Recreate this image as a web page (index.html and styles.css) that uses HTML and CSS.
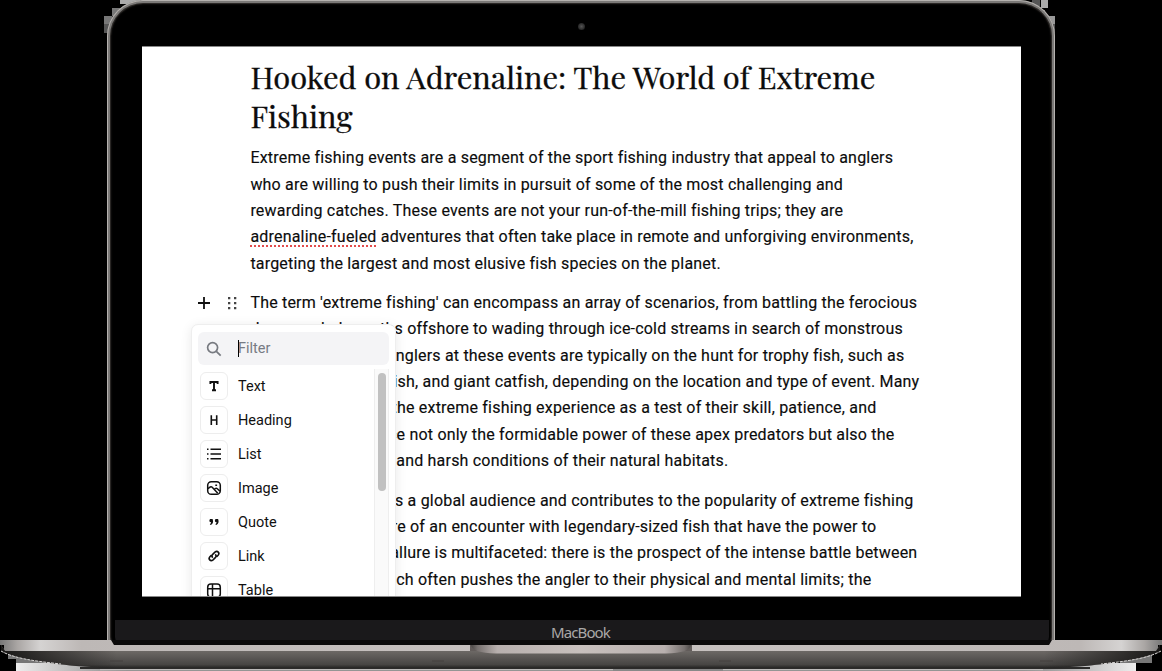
FILE: index.html
```html
<!DOCTYPE html>
<html lang="en">
<head>
<meta charset="utf-8">
<title>Hooked on Adrenaline</title>
<link rel="stylesheet" href="styles.css">
</head>
<body>
<div class="stage">
  <svg class="corners" width="1162" height="60" viewBox="0 0 1162 60" shape-rendering="crispEdges">
    <path fill="#777" d="M104 16h8v8h-8zM112 8h8v8h-8z"/><path fill="#aaa" d="M120 0h20v4h-20zM1041 0h7v8h-7z"/><path fill="#999" d="M1046 16h9v8h-9z"/><path fill="#555" d="M104 24h6v9h-6zM1049 24h6v9h-6zM1032 0h8v6h-8z"/>
  </svg>
  <div class="lid">
    <div class="camera-row"><span class="camera"></span></div>
    <main class="screen">
      <article class="doc">
        <h1>Hooked on Adrenaline: The World of Extreme<br>Fishing</h1>
        <div class="para">
          <p class="w1">Extreme fishing events are a segment of the sport fishing industry that appeal to anglers</p>
          <p class="w2">who are willing to push their limits in pursuit of some of the most challenging and</p>
          <p class="w3">rewarding catches. These events are not your run-of-the-mill fishing trips; they are</p>
          <p class="w4"><span class="typo">adrenaline-fueled</span> adventures that often take place in remote and unforgiving environments,</p>
          <p class="w5">targeting the largest and most elusive fish species on the planet.</p>
        </div>
        <div class="para">
          <p class="w6">The term 'extreme fishing' can encompass an array of scenarios, from battling the ferocious</p>
          <p class="w7">deep-sea behemoths offshore to wading through ice-cold streams in search of monstrous</p>
          <p class="w8 tail">anglers at these events are typically on the hunt for trophy fish, such as</p>
          <p class="w9 tail">fish, and giant catfish, depending on the location and type of event. Many</p>
          <p class="w10 tail">the extreme fishing experience as a test of their skill, patience, and</p>
          <p class="w11 tail">face not only the formidable power of these apex predators but also the</p>
          <p class="w12 tail">and harsh conditions of their natural habitats.</p>
        </div>
        <div class="para">
          <p class="w13 tail">draws a global audience and contributes to the popularity of extreme fishing</p>
          <p class="w14 tail">lure of an encounter with legendary-sized fish that have the power to</p>
          <p class="w15 tail">allure is multifaceted: there is the prospect of the intense battle between</p>
          <p class="w16 tail">which often pushes the angler to their physical and mental limits; the</p>
        </div>
      </article>
      <div class="handles">
        <svg width="14" height="14" viewBox="0 0 14 14"><path d="M7 1v12M1 7h12" stroke="#111" stroke-width="1.8"/></svg>
        <svg width="10" height="14" viewBox="0 0 10 14" fill="#444"><path d="M0 1h2.300v2.300H0zM6 1h2.300v2.300H6zM0 6h2.300v2.300H0zM6 6h2.300v2.300H6zM0 11h2.300v2.300H0zM6 11h2.300v2.300H6z"/></svg>
      </div>
      <div class="menu">
        <div class="filter">
          <svg width="16" height="16" viewBox="0 0 16 16" fill="none" stroke="#777a80" stroke-width="1.7"><circle cx="6.6" cy="6.6" r="5"/><path d="m10.3 10.3 4.4 4.4"/></svg>
          <span class="caret"></span><span>Filter</span>
        </div>
        <div class="list">
          <ul>
            <li><i><svg viewBox="0 0 16 16"><path d="M4.400 6V4h7.200v2M8 4v8M6 12.200h4" stroke-width="1.900"/></svg></i>Text</li>
            <li><i><svg viewBox="0 0 16 16"><path d="M5.300 3.200v9.800M10.700 3.200v9.800M5.300 8h5.400" stroke-width="1.6"/></svg></i>Heading</li>
            <li><i><svg viewBox="0 0 16 16"><path d="M4.5 3.3H15M4.5 8H15M4.5 12.7H15M1 3.3h1.5M1 8h1.5M1 12.7h1.5" stroke-width="1.6"/></svg></i>List</li>
            <li><i><svg viewBox="0 0 16 16"><rect x="1.7" y="1.7" width="12.6" height="12.6" rx="3.6"/><path d="m2 8.600 2.300-1.600q1-.6 1.900.3l5.600 6M8 9.500l1.300-1q1-.7 2 .2l2.600 2.400M9.300 5.200h1.800"/></svg></i>Image</li>
            <li><i><svg viewBox="0 0 16 16"><path d="M4 4.900h2.600Q8.200 9 4.800 11l-1-.8q1.400-.8 1.300-1.900Q2.300 7.500 4 4.900zM9.500 4.900h2.600Q13.700 9 10.300 11l-1-.8q1.400-.8 1.300-1.900Q7.800 7.500 9.500 4.900z" fill="#111" stroke="none"/></svg></i>Quote</li>
            <li><i><svg viewBox="0 0 16 16"><path d="M6.700 9.700c-1.100-1.200-1-2.400 0-3.400l2.200-2.100c2.700-2 5.200.8 3.200 3.100l-1.400 1.400M9.200 6.300c1.200 1.100 1.100 2.400.1 3.400l-2.200 2.100c-2.700 2-5.200-.8-3.200-3.100l1.400-1.400" stroke-width="1.600"/></svg></i>Link</li>
            <li><i><svg viewBox="0 0 16 16"><rect x="1.7" y="2" width="12.6" height="13" rx="3.2"/><path d="M2 6.700h12M6.500 2v13"/></svg></i>Table</li>
          </ul>
          <div class="track"><div class="thumb"></div></div>
        </div>
      </div>
    </main>
    <div class="chin"><span>MacBook</span></div>
  </div>
  <svg class="base" width="1162" height="31" viewBox="0 0 1162 31">
    <defs>
      <linearGradient id="metal" x2="0" y2="1"><stop offset="0" stop-color="#817c79"/><stop offset=".3" stop-color="#6a6663"/><stop offset=".85" stop-color="#474543"/><stop offset="1" stop-color="#252423"/></linearGradient>
      <linearGradient id="deck"><stop offset="0" stop-color="#777"/><stop offset=".015" stop-color="#aaa6a4"/><stop offset=".035" stop-color="#d5d3d2"/><stop offset=".07" stop-color="#bdb8b6"/><stop offset=".5" stop-color="#c9c3c1"/><stop offset=".93" stop-color="#bdb8b6"/><stop offset=".965" stop-color="#d5d3d2"/><stop offset=".985" stop-color="#aaa6a4"/><stop offset="1" stop-color="#777"/></linearGradient>
      <linearGradient id="notch"><stop offset="0" stop-color="#4c4846"/><stop offset=".03" stop-color="#77716f"/><stop offset=".12" stop-color="#b8b0ae"/><stop offset=".5" stop-color="#c8c0bd"/><stop offset=".88" stop-color="#b8b0ae"/><stop offset=".97" stop-color="#77716f"/><stop offset="1" stop-color="#4c4846"/></linearGradient>
      <linearGradient id="tip"><stop offset="0" stop-color="#181716"/><stop offset=".1" stop-color="#181716" stop-opacity="0"/><stop offset=".9" stop-color="#181716" stop-opacity="0"/><stop offset="1" stop-color="#181716"/></linearGradient>
      <linearGradient id="under"><stop offset="0" stop-color="#eee"/><stop offset=".1" stop-color="#888"/><stop offset=".9" stop-color="#888"/><stop offset="1" stop-color="#eee"/></linearGradient>
    </defs>
    <path fill="#777" d="M8 15h40v8H16v-4H8zM1120 15h32v8h-32z"/>
    <path fill="url(#under)" d="M16 23h1120v8H16z"/>
    <path fill="#2b2a29" d="M80 27h1010v2H80z"/>
    <path fill="#bcbab9" d="M100 29h513v1.300H100zM723 29h320v1.300H723z"/>
    <path fill="url(#deck)" d="M0 0h1162v5H0zM4 5h1154v6H4z"/>
    <path fill="url(#metal)" d="M1 5v6c15 8 45 12 75 15l30 2h949l30-2c30-3 60-7 75-15V5l-4 6H5z"/>
    <path fill="url(#tip)" d="M1 5v6c15 8 45 12 75 15l30 2h949l30-2c30-3 60-7 75-15V5l-4 6H5z"/>
    <path fill="none" stroke="#d8d6d5" stroke-dasharray="3 1" d="M1 11c12 7 32 10 60 13M1161 11c-12 7-32 10-60 13"/>
    <path fill="#0b0a0a" d="M111 0h941l-3 5H114z"/>
    <path fill="#635d5b" d="M470 5h222v6H470z"/>
    <path fill="url(#notch)" d="M471 5h220q-1 8-25 8.500H496q-24-.5-25-8.500z"/>
    <path stroke="#45413f" d="M110 21h13M432 21h12M719 21h12M1040 21h13"/>
  </svg>
</div>
</body>
</html>
```
FILE: styles.css
```css
* { box-sizing: border-box; }
body { margin: 0; background: #000; font-family: Roboto, "Liberation Sans", sans-serif; }
.stage { position: relative; width: 1162px; height: 671px; overflow: hidden; display: flex; flex-direction: column; align-items: center; }
.corners { position: absolute; left: 0; top: 0; }
.lid {
  position: relative; flex: none; width: 948px; height: 645px;
  border: 3px solid #7b7977; border-bottom: 0; border-radius: 36px 36px 8px 8px;
  background: #000; box-shadow: inset 0 0 2px 1px #282523, inset 0 0 0 1px #33302e;
  display: flex; flex-direction: column; align-items: center;
}
.lid::before { content: ""; position: absolute; inset: -3px; border: 1px solid #b5b2af; border-bottom: 0; border-radius: 36px 36px 8px 8px; }
.camera-row { height: 43px; flex: none; display: flex; justify-content: center; align-items: center; padding: 4px 0 0; }
.camera { width: 7px; height: 7px; border-radius: 50%; background: radial-gradient(#555, #222 75%); }
.screen { position: relative; flex: none; width: 879px; height: 551px; margin-left: 1px; overflow: hidden; background: #fff; border: 1px solid #888; border-width: 1px 0; }
.doc { padding: 10px 0 0 108.400px; color: #0c0c0c; }
h1 { margin: 0 0 10.200px; font: 400 30.900px/39px "Playfair Display", "Liberation Serif", serif; color: #0c0c0c; -webkit-text-stroke: .3px #0c0c0c; white-space: nowrap; }
.para { margin-bottom: 13.200px; }
p { margin: 0; height: 26.350px; font-size: 16px; line-height: 26.350px; white-space: nowrap; letter-spacing: .197px; -webkit-text-stroke: .15px #0c0c0c; }
.tail { text-align: right; }
.typo { text-decoration: underline dotted #e34b4b 1.500px; text-underline-offset: 3px; }
.w8 { width: 654px; }
.w9 { width: 669px; }
.w10 { width: 626px; }
.w11 { width: 644px; }
.w12 { width: 478px; }
.w13 { width: 663px; }
.w14 { width: 626px; }
.w15 { width: 667px; }
.w16 { width: 621px; }
.handles { position: absolute; left: 55px; top: 249px; display: flex; gap: 17px; }
.menu { position: absolute; left: 49px; top: 277px; width: 205px; height: 300px; padding: 7px 6px 6px; background: #fff; border: 1px solid #eee; border-radius: 7px; box-shadow: 0 2px 12px rgba(0,0,0,.09); }
.filter { position: relative; display: flex; align-items: center; height: 33px; width: 191px; padding-left: 8px; background: #f4f4f6; border-radius: 6px; color: #777b84; font-size: 14.500px; }
.filter svg { margin-right: 16px; }
.caret { position: absolute; left: 40px; top: 8px; width: 1px; height: 17px; background: #000; }
.list { display: flex; justify-content: space-between; width: 191px; margin-top: 4px; }
ul { list-style: none; margin: 0; padding: 0 0 0 2px; }
li { display: flex; align-items: center; height: 34px; gap: 10px; font-size: 14.500px; color: #111; }
i { width: 28px; height: 28px; display: flex; align-items: center; justify-content: center; border: 1px solid #ededed; border-radius: 6px; }
i svg { width: 16px; height: 16px; fill: none; stroke: #111; stroke-width: 1.500; }
.track { width: 15px; height: 250px; padding: 4px 3px 0; background: #fafafa; border: 1px solid #eee; border-width: 0 1px; }
.thumb { width: 8px; height: 118px; border-radius: 4px; background: #c1c1c1; }
.chin { margin: 23px 0 0 2px; width: 934px; height: 25px; padding-right: 3px; background: #1a191b; border-radius: 0 0 8px 8px; display: flex; justify-content: center; align-items: center; color: #aaa8a8; font: 15px/1 "Noto Sans", sans-serif; letter-spacing: -.9px; }
.base { position: absolute; left: 0; top: 640px; }
```
